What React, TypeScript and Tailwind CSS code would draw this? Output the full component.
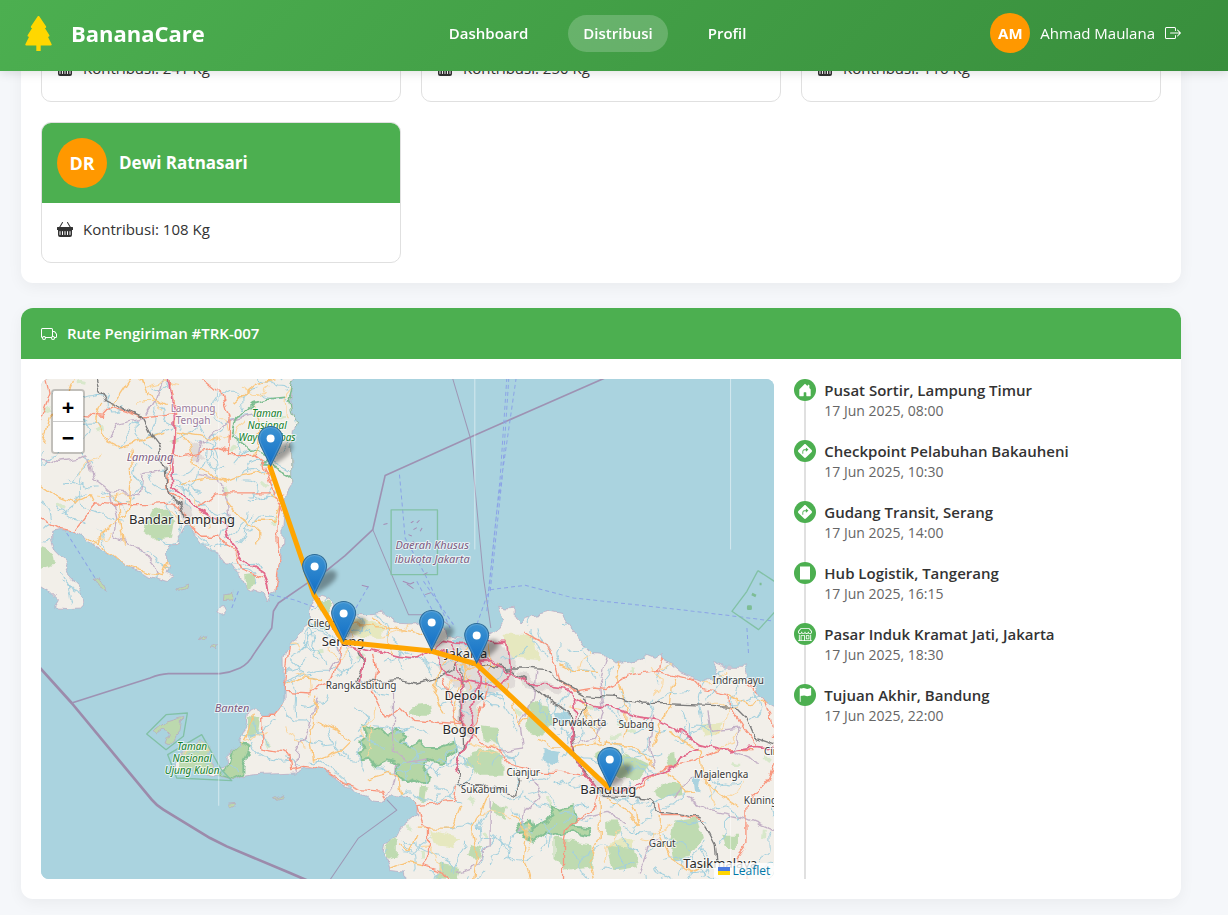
import type { IconType } from "react-icons";
import {
  BsBasketFill,
  BsBoxArrowRight,
  BsFlagFill,
  BsHouseDoorFill,
  BsShop,
  BsSignTurnRightFill,
  BsTreeFill,
  BsTruck,
} from "react-icons/bs";

const navItems = [
  { label: "Dashboard", href: "#dashboard", active: false },
  { label: "Distribusi", href: "#distribusi", active: true },
  { label: "Profil", href: "#profil", active: false },
];

const collectors = [
  { amount: 241 },
  { amount: 250 },
  { amount: 116 },
  { name: "Dewi Ratnasari", initials: "DR", amount: 108 },
];

function WarehouseIcon({ className }: { className?: string }) {
  return (
    <svg viewBox="0 0 12 14" className={className} fill="currentColor">
      <rect x="1" y="0.5" width="10" height="13" />
    </svg>
  );
}

const stops: { place: string; time: string; icon: IconType | typeof WarehouseIcon }[] = [
  { place: "Pusat Sortir, Lampung Timur", time: "17 Jun 2025, 08:00", icon: BsHouseDoorFill },
  { place: "Checkpoint Pelabuhan Bakauheni", time: "17 Jun 2025, 10:30", icon: BsSignTurnRightFill },
  { place: "Gudang Transit, Serang", time: "17 Jun 2025, 14:00", icon: BsSignTurnRightFill },
  { place: "Hub Logistik, Tangerang", time: "17 Jun 2025, 16:15", icon: WarehouseIcon },
  { place: "Pasar Induk Kramat Jati, Jakarta", time: "17 Jun 2025, 18:30", icon: BsShop },
  { place: "Tujuan Akhir, Bandung", time: "17 Jun 2025, 22:00", icon: BsFlagFill },
];

/* ---------- map data, terrain is in thirds of a pixel ---------- */

const sumatra =
  "M-10 -10H765L752 60 755 100 770 135 760 160 755 200 755 315 740 340 735 370 729 440 728 490 722 555 705 645 690 650 678 672 665 645 630 635 605 620 600 590 575 555 560 555 540 530 500 510 480 495 465 465 450 440 425 450 415 470 415 500 390 500 375 530 385 555 375 590 400 602 385 612 340 598 320 590 290 578 240 552 190 518 165 512 125 472 100 460 60 455 35 460 35 490 45 520 75 550 95 600 115 620 130 660 132 690 85 692 45 690 45 680 55 665 30 640 -10 615Z";

const java =
  "M815 670L840 655 870 665 885 690 905 715 960 710 990 710 1040 705 1065 735 1120 738 1165 730 1210 745 1215 770 1240 782 1300 788 1340 778 1372 755 1385 735 1370 685 1390 690 1425 688 1425 720 1440 735 1455 718 1500 710 1530 703 1565 710 1595 750 1630 800 1660 830 1705 835 1730 855 1795 845 1825 830 1845 838 1865 825 1870 850 1895 860 1925 885 1985 910 2025 900 2035 880 2015 850 2055 865 2115 865 2125 900 2145 930 2155 955 2215 990 2215 1520 1100 1520 1095 1485 1050 1480 1045 1450 1035 1430 1040 1390 1070 1375 1080 1350 1130 1310 1130 1280 1105 1260 1060 1250 1040 1270 990 1265 960 1250 900 1215 850 1175 790 1170 765 1185 720 1187 640 1190 610 1195 580 1205 545 1195 520 1190 500 1185 450 1180 420 1190 400 1160 415 1135 450 1105 480 1085 500 1100 500 1130 520 1150 520 1175 545 1172 560 1160 558 1135 600 1100 600 1085 620 1040 625 1000 645 990 665 1015 700 1012 735 970 735 940 733 900 732 840 748 800 780 762 808 740Z";

const islands =
  "M340 1060L375 1030 425 1015 420 1060 385 1100 375 1095 385 1070 370 1050 345 1068ZM162 600L200 618 203 640 175 622ZM555 648L575 643 575 665 553 668ZM478 788L490 772 500 770 496 780ZM510 810L535 803 530 818ZM565 1278L592 1276 590 1287 568 1286ZM700 1262L728 1250 725 1258 705 1265ZM410 630L445 618 440 632 415 637Z";

const forests = [
  "970 1040 1000 1055 1020 1050 1040 1070 1070 1055 1095 1070 1085 1095 1110 1105 1140 1090 1160 1110 1195 1110 1220 1100 1245 1090 1250 1120 1225 1135 1200 1160 1180 1145 1160 1140 1150 1170 1175 1200 1150 1220 1120 1205 1100 1212 1070 1190 1075 1160 1040 1150 1010 1165 990 1145 960 1150 955 1120 980 1110 955 1095 980 1070",
  "1450 1380 1470 1350 1520 1335 1540 1310 1530 1285 1560 1295 1600 1285 1610 1325 1590 1345 1650 1350 1640 1375 1600 1365 1560 1375 1520 1360 1480 1392",
  "600 1095 635 1110 610 1160 610 1190 580 1205 535 1190 565 1160 575 1120",
  "1430 1345 1470 1325 1475 1360 1440 1365",
];

const woods = [
  "340 400 385 395 405 430 395 480 340 485 310 460",
  "612 595 645 590 650 620 615 630",
  "-5 510 40 530 45 560 -5 575",
  "415 1135 480 1085 500 1100 520 1150 520 1180 420 1190",
  "627 1010 660 1020 655 1060 625 1080",
  "1290 1120 1350 1110 1390 1140 1390 1190 1320 1190 1275 1160",
  "1325 1045 1370 1050 1380 1100 1330 1080",
  "1110 985 1170 980 1175 1010 1110 1010",
  "1660 1130 1710 1110 1790 1140 1830 1160 1800 1200 1740 1200 1700 1170",
  "1880 1130 1905 1125 1910 1160 1890 1165",
  "1840 1240 1880 1220 1930 1220 1930 1250 1870 1260",
  "1470 970 1520 980 1540 1040 1500 1070 1460 1060",
  "1540 1380 1660 1400 1660 1470 1590 1480 1540 1440",
  "1695 1330 1740 1330 1735 1370 1695 1365",
  "1900 1330 1970 1320 1985 1380 1940 1440 1900 1450 1890 1390",
  "2040 1370 2090 1370 2090 1410 2050 1410",
  "1045 1380 1070 1390 1070 1430 1040 1440",
  "1290 1400 1330 1410 1320 1440 1280 1430",
  "1200 1460 1260 1470 1250 1505 1190 1500",
  "1700 1400 1780 1410 1790 1470 1720 1480",
  "825 670 870 668 878 700 850 712",
  "1360 1270 1400 1290 1390 1320 1350 1300",
  "1140 1230 1160 1235 1155 1270 1135 1265",
];

const heath = [
  "1170 1355 1260 1380 1240 1410 1180 1400",
  "890 720 960 725 1030 740 1020 780 940 775",
  "1390 770 1480 770 1500 850 1410 840",
  "1980 1040 2050 1030 2040 1070 1990 1080",
  "1700 1390 1780 1380 1770 1430 1710 1440",
];

const urban = [
  "1180 780 1240 800 1380 790 1430 850 1420 930 1340 950 1250 930 1190 870",
  "1260 950 1320 950 1300 1080 1260 1070",
  "1650 1190 1740 1200 1760 1250 1680 1260",
  "415 370 450 385 460 430 430 430",
  "450 190 475 200 490 240 455 250",
  "1430 880 1500 910 1570 930 1560 950 1460 930",
];

const lakes = [
  "1540 1000 1590 1005 1580 1040 1545 1020",
  "1510 1115 1560 1125 1550 1160 1510 1150",
  "1960 1200 1985 1200 1980 1250 1965 1245",
  "1235 785 1300 785 1290 810 1240 800",
];

const motorways = [
  "385 0 395 60 403 120 400 200 395 250 398 330 450 370 475 395 520 420 560 450 575 500 610 545 670 585 685 620 690 650",
  "830 665 850 700 880 750 910 800 990 815 1080 835 1130 840 1180 815 1230 830 1290 850 1350 845 1400 880 1455 910 1490 920 1575 930 1605 960 1655 985 1715 990 1785 1015 1855 1025 1905 1050 1975 1100 2055 1120 2145 1105 2205 1110",
  "1190 830 1190 850 1220 890 1280 910 1370 930 1410 890 1400 790 1320 790 1260 800 1210 790 1180 815",
  "1605 960 1610 1010 1590 1060 1600 1120 1620 1170 1655 1210 1670 1230 1750 1240 1800 1215 1835 1190 1900 1165 1925 1130 1975 1110",
  "1320 840 1320 910 1300 960 1290 1020 1295 1070 1270 1110 1255 1160 1245 1190",
  "950 810 970 850 960 910",
  "1240 800 1250 850 1270 960 1270 1050",
];

const trunks = [
  "0 130 30 50 20 0",
  "130 110 190 115 215 88 310 120 400 110",
  "390 0 407 100 402 200 388 250 380 330 420 370",
  "485 0 550 55 570 120 565 230 630 230 670 260 700 340 725 400",
  "0 420 55 450 100 460 165 375 240 380 320 380 400 375 430 400 460 450 490 475 540 475 590 530 605 575 670 600",
  "470 390 530 345 590 345 690 345",
  "725 350 710 450 720 540 705 640",
  "400 240 470 225 530 205 565 215",
  "748 800 740 870 735 940 810 945 840 920 880 900 900 840 910 800",
  "735 970 700 1015 665 1015 665 1110 720 1120 750 1130 755 1175 790 1165 850 1175 910 1215 960 1235 1030 1240 1040 1265 1100 1260 1130 1280 1240 1270 1250 1220",
  "1130 1280 1145 1340 1165 1350 1165 1440 1150 1460 1210 1480 1230 1520",
  "1000 830 1010 870 1000 950 1020 990 1040 1020 1080 990 1120 1030 1180 1035 1270 1040 1320 1090 1370 1110 1410 1160 1500 1180 1560 1180 1640 1190 1670 1230",
  "1455 765 1520 800 1550 870 1560 910 1600 940 1660 930 1700 935 1760 895 1855 880 1960 905 1990 935 2070 950 2070 990 2110 1050 2150 1100",
  "2120 920 2170 960 2190 1020 2200 1080",
  "1780 1250 1860 1170 1960 1150 2050 1115 2140 1115",
  "1670 1240 1660 1290 1580 1350 1570 1400 1570 1510",
  "1860 1270 1870 1310 1920 1310 2000 1330",
  "2205 1150 2185 1200 2120 1280 2120 1400 2090 1440 2130 1510",
  "1855 880 1860 850 1870 840",
  "1210 900 1230 960 1240 1020 1270 1040",
  "1340 930 1320 1000 1290 1060",
];

const primaries = [
  "185 75 165 130 200 190 240 210 370 165",
  "270 0 215 85",
  "0 320 50 355 100 375 150 350 160 370",
  "270 215 275 290 265 400 180 470 175 505",
  "410 160 480 170 545 190",
  "580 80 650 20 710 0",
  "550 310 600 290 660 280 700 300",
  "560 370 600 420 650 450 650 500",
  "690 350 725 370 700 430 650 430",
  "140 480 200 520 250 560 320 580 365 590 385 540 410 500",
  "230 350 240 440 250 500",
  "420 160 450 200 460 260 500 280 545 310",
  "100 0 80 60 30 120 10 200",
  "300 0 320 50 380 80",
  "640 80 660 160 640 240",
  "420 320 500 300 560 310",
  "740 920 790 900 840 905",
  "830 950 820 1030 810 1060 820 1150 900 1120 930 1090 900 1060 830 1030",
  "990 720 1050 750 1040 790 1060 830",
  "880 750 960 740 1040 750 1120 760 1180 790",
  "1220 830 1190 900 1180 950 1210 1010",
  "980 1200 1050 1180 1075 1200 1085 1250",
  "1290 860 1260 920 1240 1000 1250 1060",
  "1400 920 1420 980 1440 1040 1480 1000",
  "1490 1080 1540 1110 1600 1110 1700 1095 1790 1110 1840 1170",
  "1670 880 1600 880 1560 860",
  "1740 850 1730 900 1760 1000 1760 1040 1750 1090",
  "1900 900 1890 980 1860 1040 1840 1100",
  "1890 1060 1980 1120 1990 1200 2040 1250 2100 1290",
  "1680 1260 1680 1380 1650 1450 1665 1510",
  "1700 1260 1760 1300 1800 1340 1780 1280",
  "1130 1350 1240 1350 1265 1280",
  "1080 1400 1110 1420 1130 1370",
  "1050 1470 1100 1450 1150 1460",
  "1340 1250 1300 1350 1310 1420 1300 1510",
  "1860 1310 1860 1370 1890 1440 1950 1480 2010 1450",
  "1280 800 1275 860 1290 930",
  "1340 800 1350 870 1330 930",
  "1230 850 1300 870 1380 860",
  "1420 1310 1460 1360 1450 1440 1470 1510",
  "1620 960 1650 1040 1680 1090",
  "2070 950 2130 980 2180 970",
  "1960 1250 1900 1200 1870 1180",
  "640 1010 625 1060 610 1090",
];

const rails = [
  "165 0 175 35 195 70 240 90 310 120 340 180 355 200 375 270 380 320 395 360 425 385 435 415",
  "1000 910 1080 905 1130 915 1200 895 1240 870 1260 840 1300 860 1400 870 1455 870 1520 875 1560 910 1630 950 1720 955 1810 975 1950 980 2085 985 2120 1020 2145 1080 2205 1100",
  "1380 860 1455 905 1530 970 1590 1000 1595 1080 1610 1150 1660 1215 1690 1255 1780 1260 1830 1265 1865 1300 1940 1310 1980 1320 2010 1370 2025 1400 2030 1450",
  "1265 870 1265 970 1270 1100 1250 1180 1260 1220 1320 1220 1430 1250 1440 1200",
  "950 820 970 860 950 910 1000 910",
  "1630 955 1635 980 1625 1010 1595 1050",
];

const districts = [
  "140 230 160 300 210 340 300 350 310 290 360 280",
  "0 240 60 250 120 240 140 230",
  "210 340 230 420 220 480 300 510 340 560 350 590",
  "320 110 350 60 370 0",
  "200 190 230 140 320 120",
  "470 250 480 200 570 130 640 110",
  "480 290 530 300 560 360 570 440",
  "840 960 820 990 800 1060 770 1120 765 1180",
  "1060 940 1060 1000 1060 1120 1100 1150 1160 1140",
  "1070 1160 1060 1210 1040 1260",
  "880 760 900 830 870 880",
  "1490 880 1480 960 1440 1040 1450 1110 1380 1120",
  "1700 840 1680 920 1690 1000 1660 1080 1600 1100",
  "1840 1010 1830 1090 1840 1170",
  "2000 1000 2010 1060 2100 1050 2080 1120 2150 1150",
  "1940 1260 2010 1300 2110 1320 2205 1360",
  "1900 1260 1950 1200 2020 1190",
  "1350 1260 1350 1400 1310 1460 1250 1480",
  "1480 1200 1500 1260 1450 1300 1440 1360",
  "1620 1320 1700 1300 1760 1340",
  "1800 1480 1830 1400 1860 1380",
];

const parkBorders = [
  "690 262 665 260 690 240 635 215 575 170 590 120 640 75 690 60 735 55",
  "757 300 745 290 715 275 695 265",
  "762 10 748 60 755 100 770 135 757 200 757 315",
];

const places: {
  lines: string[];
  x: number;
  y: number;
  kind: "city" | "town" | "region" | "district" | "park";
}[] = [
  { lines: ["Bandar Lampung"], x: 141, y: 145, kind: "city" },
  { lines: ["Lampung", "Tengah"], x: 152, y: 33, kind: "district" },
  { lines: ["Lampung"], x: 109, y: 82, kind: "region" },
  { lines: ["Taman", "Nasional", "Way Kambas"], x: 226, y: 38, kind: "park" },
  { lines: ["Cilegon"], x: 284, y: 248, kind: "town" },
  { lines: ["Serang"], x: 302, y: 267, kind: "city" },
  { lines: ["Jakarta"], x: 425, y: 279, kind: "city" },
  { lines: ["Rangkasbitung"], x: 320, y: 310, kind: "town" },
  { lines: ["Depok"], x: 423, y: 321, kind: "city" },
  { lines: ["Bogor"], x: 420, y: 355, kind: "city" },
  { lines: ["Sukabumi"], x: 443, y: 414, kind: "town" },
  { lines: ["Cianjur"], x: 482, y: 397, kind: "town" },
  { lines: ["Purwakarta"], x: 538, y: 347, kind: "town" },
  { lines: ["Subang"], x: 595, y: 349, kind: "town" },
  { lines: ["Indramayu"], x: 697, y: 305, kind: "town" },
  { lines: ["Majalengka"], x: 680, y: 399, kind: "town" },
  { lines: ["Kuningan"], x: 725, y: 425, kind: "town" },
  { lines: ["Cirebon"], x: 741, y: 376, kind: "town" },
  { lines: ["Bandung"], x: 567, y: 415, kind: "city" },
  { lines: ["Garut"], x: 621, y: 468, kind: "town" },
  { lines: ["Tasikmalaya"], x: 679, y: 489, kind: "city" },
  { lines: ["Banten"], x: 191, y: 333, kind: "region" },
  { lines: ["Taman", "Nasional", "Ujung Kulon"], x: 151, y: 371, kind: "park" },
  { lines: ["Daerah Khusus", "ibukota Jakarta"], x: 391, y: 170, kind: "region" },
];

const placeStyles = {
  city: "text-[13px] fill-[#2b2b2b]",
  town: "text-[10px] fill-[#3a3a3a]",
  region: "text-[11px] italic fill-[#7d5a80]",
  district: "text-[10px] fill-[#9a7a9c]",
  park: "text-[10px] italic fill-[#12802a]",
};

const route = [
  [229, 88],
  [273, 216],
  [302, 263],
  [390, 272],
  [435, 285],
  [568, 409],
];

// small deterministic streams and lanes that fill the land between the main lines
function makeStreams(count: number, steps: number, start: number) {
  let seed = start;
  const next = () => {
    seed = (seed * 16807) % 2147483647;
    return seed / 2147483647;
  };
  let d = "";
  for (let i = 0; i < count; i++) {
    const x = next() * 2200;
    const y = next() * 1500;
    let angle = next() * 6.28;
    d += `M${x.toFixed(0)} ${y.toFixed(0)}`;
    for (let j = 0; j < steps; j++) {
      angle += (next() - 0.5) * 1.4;
      d += `l${(Math.cos(angle) * 13).toFixed(0)} ${(Math.sin(angle) * 13).toFixed(0)}`;
    }
  }
  return d;
}

const streams = makeStreams(560, 8, 4217);
const lanes = makeStreams(70, 8, 911);
const copses = makeStreams(110, 2, 5309);

function Lines({ data, className }: { data: string[]; className: string }) {
  return (
    <g fill="none" strokeLinejoin="round" className={className}>
      {data.map((points) => (
        <polyline key={points} points={points} />
      ))}
    </g>
  );
}

function Areas({ data, className }: { data: string[]; className: string }) {
  return (
    <g className={className}>
      {data.map((points) => (
        <polygon key={points} points={points} />
      ))}
    </g>
  );
}

function RouteMap() {
  return (
    <svg
      viewBox="0 0 733 500"
      preserveAspectRatio="xMidYMid slice"
      className="block h-full w-full bg-[#aad3df]"
      role="img"
      aria-label="Peta rute pengiriman"
    >
      <defs>
        <filter
          id="rough"
          x="0"
          y="0"
          width="733"
          height="500"
          filterUnits="userSpaceOnUse"
          colorInterpolationFilters="sRGB"
        >
          <feTurbulence type="fractalNoise" baseFrequency="0.08" numOctaves="2" seed="8" result="noise" />
          <feDisplacementMap in="SourceGraphic" in2="noise" scale="10" xChannelSelector="R" yChannelSelector="G" />
        </filter>
        <filter id="soft" x="-50%" y="-50%" width="200%" height="200%">
          <feGaussianBlur stdDeviation="2" />
        </filter>
        <clipPath id="land">
          <path d={sumatra} />
          <path d={java} />
        </clipPath>
        <linearGradient id="pin" x1="0" y1="0" x2="0" y2="1">
          <stop offset="0" stopColor="#3c93d2" />
          <stop offset="1" stopColor="#126fc6" />
        </linearGradient>
      </defs>

      <g filter="url(#rough)">
        <rect x="-20" y="-20" width="780" height="540" fill="#aad3df" />
        <g transform="translate(-1 -1) scale(0.3333)">
          <g className="fill-[#f2efe9] stroke-[#b9a3bd] stroke-2">
            <path d={sumatra} />
            <path d={java} />
            <circle cx="548" cy="697" r="14" />
          </g>
          <path d={islands} className="fill-[#bcd9ae] stroke-[#b9a3bd] stroke-2" />
          <g clipPath="url(#land)">
            <path d={copses} className="fill-none stroke-[#d8e8cb] stroke-[12]" strokeLinejoin="round" />
            <Areas data={heath} className="fill-[#e6e8bf]" />
            <Areas data={urban} className="fill-[#e0dbd8]" />
            <Areas data={woods} className="fill-[#bfdbb1]" />
            <Areas data={forests} className="fill-[#b5d6a6] stroke-[#85c194] stroke-6" />
            <Areas data={lakes} className="fill-[#aad3df]" />
            <path d={streams} className="fill-none stroke-[#a3d0de] stroke-3" />
            <path d={lanes} className="fill-none stroke-[#fbd59a] stroke-3" />
            <Lines data={districts} className="stroke-[#c3b0c6] stroke-4" />
            <Lines data={parkBorders} className="stroke-[#7dbd90] stroke-5" />
            <Lines data={primaries} className="stroke-[#fac57a] stroke-4" />
            <Lines data={trunks} className="stroke-[#f9957c] stroke-4" />
            <Lines data={rails} className="stroke-[#7c7c7c] stroke-4" />
            <Lines data={motorways} className="stroke-[#e2688a] stroke-5" />
          </g>
        </g>
      </g>

      <g transform="translate(-1 -1) scale(0.3333)" fill="none" strokeLinejoin="round">
        <path
          d="M0 870L95 975 335 1265Q350 1283 370 1295L510 1380 560 1405 750 1485 820 1515"
          className="stroke-[#9c8bab] stroke-8"
        />
        <path
          d="M95 975L330 900Q360 888 385 887H540Q570 884 600 870Q625 858 640 830L695 750 700 700 715 675 795 620 860 577 915 533 998 455 1035 293 1290 178 1455 105 1695 0"
          className="stroke-[#9e92b3] stroke-5"
        />
        <path
          d="M998 455L1105 710 1180 710 1225 740M1237 0L1290 178 1330 600 1352 750M1040 1265L1070 1296 955 1380 870 1505"
          className="stroke-[#9e97b5] stroke-3"
        />
        <path
          d="M1078 290L1088 400 1095 480 1155 590 1230 750M1400 0L1380 300 1345 640 1310 740M1406 0L1386 300 1350 640M1428 0L1370 400 1340 700M1350 635L1455 622 1600 660 1920 695 2110 718 2205 730M80 465L165 600M595 640L575 690M690 650L760 665 830 690M2120 750L2125 830M985 625L930 720M1130 610L1200 740M1150 610L1240 740"
          strokeDasharray="12 9"
          className="stroke-[#8ba3e6] stroke-3"
        />
        <path
          d="M1053 396H1192V590H1053ZM320 1068L378 1010 442 1005 430 1075 378 1115ZM383 1130L485 1070 542 1172 575 1208 410 1200ZM2153 578L2205 612M2205 700L2155 755 2075 700 2120 640 2153 578"
          className="stroke-[#82c1a6] stroke-4"
        />
        <path
          d="M1112 435l8 -5M1120 455l10 -6M1105 470l10 4M1130 435l8 -8M1118 490l6 8M1088 610l22 8 12 -5M1150 590l12 -6M1100 618l20 14M1155 650l18 -6M965 622l20 5M1140 460l6 -10M1030 440l12 -3"
          className="stroke-[#a58bb5] stroke-3"
        />
        <path d="M2158 618h6M2135 648l12 6M2124 686h7v6h-7z" className="stroke-[#7dbd95] stroke-8" />
        <path d="M536 0V1283M1304 0V515M2071 0V515M2071 1285V1510" className="stroke-white/50 stroke-3" />
      </g>

      <g textAnchor="middle" className="font-['Noto_Sans','Open_Sans',sans-serif]">
        {places.map((place) => (
          <text
            key={place.lines.join(" ") + place.y}
            className={placeStyles[place.kind]}
            stroke="#ffffff"
            strokeOpacity="0.7"
            strokeWidth="2"
            strokeLinejoin="round"
            paintOrder="stroke"
          >
            {place.lines.map((line, index) => (
              <tspan key={line} x={place.x} y={place.y + index * (place.kind === "region" ? 14 : 12)}>
                {line}
              </tspan>
            ))}
          </text>
        ))}
      </g>

      <g>
        {route.map(([x, y]) => (
          <path
            key={x}
            d={`M${x} ${y}l5 -18q10 -10 17 -5q3 6 -8 14z`}
            fill="#000000"
            fillOpacity="0.35"
            filter="url(#soft)"
          />
        ))}
      </g>
      <polyline
        points={route.map((point) => point.join(" ")).join(" ")}
        fill="none"
        stroke="#ffa500"
        strokeWidth="5"
        strokeLinejoin="round"
        strokeLinecap="round"
      />
      {route.map(([x, y]) => (
        <g key={x} transform={`translate(${x - 12} ${y - 41})`}>
          <path
            d="M12.5 0.5C5.8 0.5 0.5 5.8 0.5 12.3C0.5 15.5 1.8 18.3 3.2 21L12.5 40L21.8 21C23.2 18.3 24.5 15.5 24.5 12.3C24.5 5.8 19.2 0.5 12.5 0.5Z"
            fill="url(#pin)"
            stroke="#2e6c97"
          />
          <path
            d="M12.5 1.6C6.4 1.6 1.6 6.4 1.6 12.3C1.6 15.2 2.8 17.9 4.2 20.5L12.5 37.6L20.8 20.5C22.2 17.9 23.4 15.2 23.4 12.3C23.4 6.4 18.6 1.6 12.5 1.6Z"
            fill="none"
            stroke="#ffffff"
            strokeOpacity="0.15"
          />
          <circle cx="12.5" cy="12.5" r="4" fill="#ffffff" />
        </g>
      ))}
    </svg>
  );
}

function Header() {
  return (
    <header className="fixed inset-x-0 top-0 z-10 flex h-[71px] items-center justify-between bg-linear-135 from-[#4caf50] to-[#388e3c] pr-[47px] pb-[5px] pl-[21px] text-white shadow-[0_2px_10px_rgba(0,0,0,0.12)]">
      <div className="flex items-center gap-[15px]">
        <BsTreeFill className="size-[35px] text-[#ffd700]" />
        <h1 className="text-[22px] leading-7 font-bold">BananaCare</h1>
      </div>
      <nav className="flex gap-[25px]">
        {navItems.map((item) => (
          <a
            key={item.label}
            href={item.href}
            className={
              item.active
                ? "rounded-full bg-white/20 px-[15px] py-2 text-[15px] leading-[21px] font-semibold"
                : "rounded-full px-[15px] py-2 text-[15px] leading-[21px] font-semibold"
            }
          >
            {item.label}
          </a>
        ))}
      </nav>
      <div className="flex items-center gap-[10px] text-[15px]">
        <div className="flex size-10 items-center justify-center rounded-full bg-[#ff9800] font-bold">AM</div>
        <span>Ahmad Maulana</span>
        <button type="button" aria-label="Keluar">
          <BsBoxArrowRight className="size-4" />
        </button>
      </div>
    </header>
  );
}

export default function App() {
  return (
    <div className="min-h-screen bg-[#f5f7fa] font-['Segoe_UI','Open_Sans',sans-serif] text-[#333333]">
      <Header />
      <main className="flex flex-col gap-[25px] pt-[21px] pr-[47px] pb-4 pl-[21px]">
        <section className="rounded-xl bg-white p-5 shadow-[0_4px_15px_rgba(0,0,0,0.05)]">
          <div className="grid grid-cols-3 gap-5">
            {collectors.map((collector) => (
              <article key={collector.amount} className="overflow-hidden rounded-[10px] border border-[#e0e0e0]">
                {collector.name && (
                  <div className="flex items-center gap-3 bg-[#4caf50] p-[15px] text-white">
                    <div className="flex size-[50px] items-center justify-center rounded-full bg-[#ff9800] text-[18px] font-bold">
                      {collector.initials}
                    </div>
                    <h3 className="text-[17px] font-bold">{collector.name}</h3>
                  </div>
                )}
                <p className="flex items-center gap-[10px] px-[15px] pt-[15px] pb-[22px] text-[15px] leading-[22px]">
                  <BsBasketFill className="size-4" />
                  Kontribusi: {collector.amount} Kg
                </p>
              </article>
            ))}
          </div>
        </section>

        <section className="overflow-hidden rounded-xl bg-white shadow-[0_4px_15px_rgba(0,0,0,0.05)]">
          <h2 className="flex h-[51px] items-center gap-[10px] bg-[#4caf50] px-5 text-[15px] font-semibold text-white">
            <BsTruck className="size-4" />
            Rute Pengiriman #TRK-007
          </h2>
          <div className="grid grid-cols-[2fr_1fr] gap-5 p-5">
            <div className="relative h-[500px] overflow-hidden rounded-lg">
              <RouteMap />
              <div className="absolute top-[10px] left-[10px] flex flex-col overflow-hidden rounded border-2 border-black/20 bg-clip-padding text-[22px] font-bold text-black">
                <button
                  type="button"
                  aria-label="Perbesar"
                  className="flex h-[31px] w-[30px] items-center justify-center border-b border-[#cccccc] bg-white leading-none"
                >
                  +
                </button>
                <button
                  type="button"
                  aria-label="Perkecil"
                  className="flex size-[30px] items-center justify-center bg-white leading-none"
                >
                  −
                </button>
              </div>
              <a
                href="#leaflet"
                className="absolute right-0 bottom-0 flex items-center gap-[3px] bg-white/80 px-1 text-[12px] leading-4 text-[#0078a8]"
              >
                <svg viewBox="0 0 12 8" className="h-2 w-3">
                  <path fill="#4c7be1" d="M0 0h12v4H0z" />
                  <path fill="#ffd500" d="M0 4h12v4H0z" />
                </svg>
                Leaflet
              </a>
            </div>

            <ol className="relative flex flex-col gap-[19px]">
              <li aria-hidden="true" className="absolute inset-y-0 left-[10px] w-[2px] bg-[#e0e0e0]" />
              {stops.map((stop) => {
                const Icon = stop.icon;
                return (
                  <li key={stop.place} className="relative flex gap-2">
                    <span className="flex size-[22px] items-center justify-center rounded-full bg-[#4caf50] text-white">
                      <Icon className="size-[14px]" />
                    </span>
                    <div>
                      <p className="text-[15px] leading-[22px] font-semibold">{stop.place}</p>
                      <p className="text-[14px] leading-5 text-[#666666]">{stop.time}</p>
                    </div>
                  </li>
                );
              })}
            </ol>
          </div>
        </section>
      </main>
    </div>
  );
}
